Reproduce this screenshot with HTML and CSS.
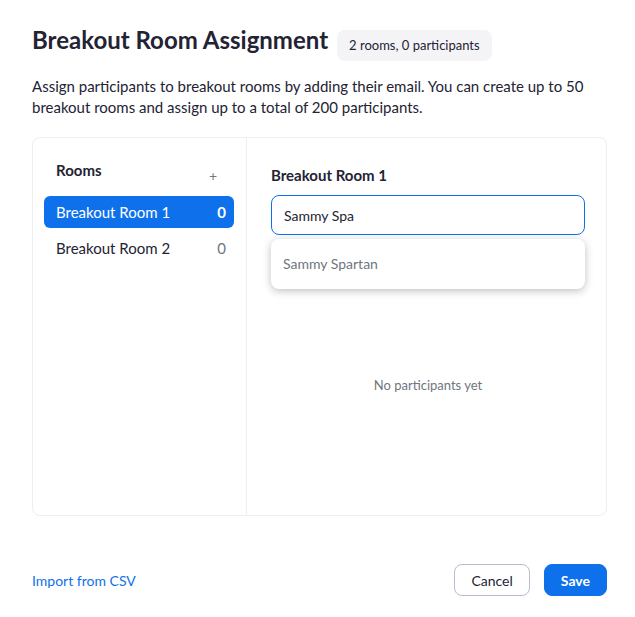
FILE: index.html
```html
<!DOCTYPE html>
<html lang="en">
<head>
  <meta charset="UTF-8">
  <title>Breakout Room Assignment</title>
  <link rel="stylesheet" href="styles.css">
</head>
<body>
  <div class="dialog">
    <div class="header">
      <h1>Breakout Room Assignment</h1>
      <span class="badge">2 rooms, 0 participants</span>
    </div>
    <p class="intro">Assign participants to breakout rooms by adding their email. You can create up to 50 breakout rooms and assign up to a total of 200 participants.</p>

    <div class="panel">
      <div class="rooms">
        <div class="rooms-head">
          <h3>Rooms</h3>
          <span class="add">+</span>
        </div>
        <div class="room active">
          <span>Breakout Room 1</span>
          <span class="count">0</span>
        </div>
        <div class="room">
          <span>Breakout Room 2</span>
          <span class="count">0</span>
        </div>
      </div>

      <div class="detail">
        <h3>Breakout Room 1</h3>
        <div class="search">
          <input type="text" value="Sammy Spa">
          <div class="suggest">Sammy Spartan</div>
        </div>
        <div class="empty">No participants yet</div>
      </div>
    </div>

    <div class="footer">
      <a href="#" class="link">Import from CSV</a>
      <div class="buttons">
        <button class="btn">Cancel</button>
        <button class="btn primary">Save</button>
      </div>
    </div>
  </div>
</body>
</html>
```

FILE: styles.css
```css
body {
  margin: 0;
  font-family: Lato, "Open Sans", sans-serif;
  color: #232333;
  background: #fff;
}
.dialog {
  padding: 24px 28px 0 32px;
}
.header {
  display: flex;
  align-items: flex-start;
  gap: 9px;
  height: 32px;
}
.header h1 {
  margin: 0;
  font-size: 24px;
  font-weight: 700;
  line-height: 32px;
}
.badge {
  background: #f4f4f7;
  border-radius: 8px;
  font-size: 13px;
  padding: 7px 12px 8px 12px;
  margin-top: 6px;
}
.intro {
  margin: 20px 0 19px;
  font-size: 15px;
  line-height: 21px;
}
.panel {
  display: flex;
  height: 377px;
  border: 1px solid #ededf4;
  border-radius: 8px;
}
.rooms {
  width: 190px;
  padding: 0 12px 0 11px;
  border-right: 1px solid #ededf4;
}
.rooms-head {
  display: flex;
  justify-content: space-between;
  align-items: flex-end;
  padding: 23px 17px 17px 12px;
}
.rooms-head h3 {
  margin: 0;
  font-size: 15px;
  font-weight: 700;
  line-height: 18px;
}
.add {
  color: #747487;
  font-size: 14px;
  line-height: 14px;
  margin-bottom: -4px;
}
.room {
  display: flex;
  justify-content: space-between;
  align-items: center;
  height: 32px;
  padding: 0 8px 0 12px;
  margin-bottom: 4px;
  border-radius: 6px;
  font-size: 15px;
}
.room .count {
  color: #6e7680;
}
.room.active {
  background: #0e71eb;
  color: #fff;
}
.room.active .count {
  color: #fff;
  font-weight: 700;
}
.detail {
  flex: 1;
  padding: 26px 21px 0 24px;
  display: flex;
  flex-direction: column;
}
.detail h3 {
  margin: 0 0 9px;
  font-size: 15px;
  font-weight: 700;
  line-height: 22px;
}
.search {
  position: relative;
}
.search input {
  box-sizing: border-box;
  width: 100%;
  height: 40px;
  border: 1px solid #0e71eb;
  border-radius: 8px;
  padding: 0 12px;
  font-family: inherit;
  font-size: 14px;
  color: #232333;
  outline: none;
}
.suggest {
  position: absolute;
  left: 0;
  right: 0;
  top: 44px;
  height: 50px;
  line-height: 50px;
  padding: 0 12px;
  background: #fff;
  border-radius: 8px;
  box-shadow: 0 2px 8px rgba(0, 0, 0, 0.25);
  font-size: 14px;
  color: #6e7680;
}
.empty {
  flex: 1;
  display: flex;
  align-items: center;
  justify-content: center;
  font-size: 13px;
  color: #6e7680;
  padding-top: 20px;
}
.footer {
  display: flex;
  justify-content: space-between;
  align-items: center;
  margin-top: 48px;
}
.link {
  color: #0e71eb;
  text-decoration: none;
  font-size: 14px;
}
.buttons {
  display: flex;
  gap: 14px;
}
.btn {
  height: 32px;
  padding: 0 16px;
  border: 1px solid #babacc;
  border-radius: 8px;
  background: #fff;
  font-family: inherit;
  font-size: 14px;
  color: #232333;
}
.btn.primary {
  background: #0e71eb;
  border-color: #0e71eb;
  color: #fff;
  font-weight: 700;
}
```
